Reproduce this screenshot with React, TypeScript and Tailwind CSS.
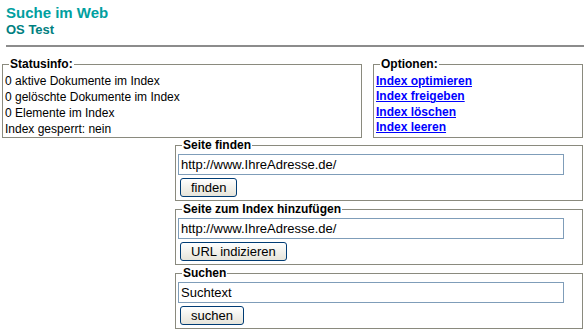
import React from 'react';

const fieldsetCls = 'border border-[#8a8a7e] px-[2px]';
const legendCls = 'ml-[4px] px-[1px] font-bold text-[12px] leading-[14px]';

function Box({ title, value, button }: { title: string; value: string; button: string }) {
  return (
    <fieldset className={`${fieldsetCls} pb-[3px]`}>
      <legend className={legendCls}>{title}</legend>
      <input
        type="text"
        defaultValue={value}
        className="mt-[2px] block w-[386px] h-[21px] border border-[#7f9db9] px-[2px] text-[13px] outline-none bg-white text-black"
      />
      <button
        type="button"
        className="mt-[3px] ml-[2px] block h-[19px] rounded-[3px] border border-[#003c74] bg-gradient-to-b from-white to-[#e6e4da] px-[10px] text-[13px] leading-[15px] text-black"
      >
        {button}
      </button>
    </fieldset>
  );
}

export default function App() {
  return (
    <div className="w-[586px] h-[333px] overflow-hidden bg-white text-black font-['Liberation_Sans',Arial,sans-serif] text-[12px]">
      <div className="pl-[6px] pt-[3px]">
        <div className="font-bold text-[15px] leading-[19px] text-[#00a0a0]">Suche im Web</div>
        <div className="font-bold text-[13px] leading-[16px] text-[#008080]">OS Test</div>
      </div>
      <div className="ml-[6px] mr-[2px] mt-[7px] h-[2px] bg-[#8c8c8c]" />

      <div className="flex items-stretch mt-[10px] pl-[2px] gap-[11px]">
        <fieldset className={`${fieldsetCls} w-[360px]`}>
          <legend className={legendCls}>Statusinfo:</legend>
          <div className="leading-[16px] pt-[2px]">
            <div>0 aktive Dokumente im Index</div>
            <div>0 gelöschte Dokumente im Index</div>
            <div>0 Elemente im Index</div>
            <div>Index gesperrt: nein</div>
          </div>
        </fieldset>
        <fieldset className={`${fieldsetCls} w-[210px]`}>
          <legend className={legendCls}>Optionen:</legend>
          <div className="flex flex-col items-start leading-[15.4px] pt-[3px] font-bold">
            <a href="#" className="text-[#0000ff] underline">Index optimieren</a>
            <a href="#" className="text-[#0000ff] underline">Index freigeben</a>
            <a href="#" className="text-[#0000ff] underline">Index löschen</a>
            <a href="#" className="text-[#0000ff] underline">Index leeren</a>
          </div>
        </fieldset>
      </div>

      <div className="ml-[175px] w-[408px] flex flex-col gap-[1px]">
        <Box title="Seite finden" value="http://www.IhreAdresse.de/" button="finden" />
        <Box title="Seite zum Index hinzufügen" value="http://www.IhreAdresse.de/" button="URL indizieren" />
        <Box title="Suchen" value="Suchtext" button="suchen" />
      </div>
    </div>
  );
}
